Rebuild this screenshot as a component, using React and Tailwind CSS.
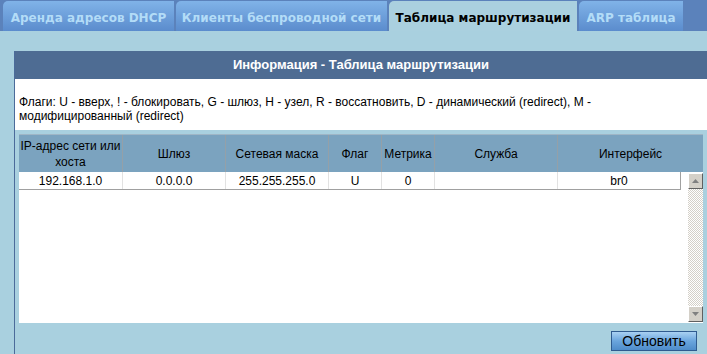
import React from "react";

const tabs = [
  { label: "Аренда адресов DHCP", w: "w-[171px]" },
  { label: "Клиенты беспроводной сети", w: "w-[211px]" },
  { label: "Таблица маршрутизации", w: "w-[188px]", active: true },
  { label: "ARP таблица", w: "w-[104px]" },
];

const cols = [
  { title: <>IP-адрес сети или<br />хоста</>, key: "ip", w: "w-[104px]", value: "192.168.1.0" },
  { title: "Шлюз", key: "gw", w: "w-[103px]", value: "0.0.0.0" },
  { title: "Сетевая маска", key: "mask", w: "w-[103px]", value: "255.255.255.0" },
  { title: "Флаг", key: "flag", w: "w-[53px]", value: "U" },
  { title: "Метрика", key: "metric", w: "w-[53px]", value: "0" },
  { title: "Служба", key: "svc", w: "w-[123px]", value: "" },
];

// кнопка скроллбара в стиле win
const ScrollBtn = ({ down }) => (
  <div className="w-[15px] h-[16px] bg-[#d4d0c8] border border-t-white border-l-white border-r-[#606060] border-b-[#606060] flex items-center justify-center">
    <svg width="9" height="6" viewBox="0 0 9 6">
      {down ? (
        <polygon points="1,1 8,1 4.5,5" fill="#808080" />
      ) : (
        <polygon points="1,5 8,5 4.5,1" fill="#808080" />
      )}
    </svg>
  </div>
);

export default function App() {
  return (
    <div className="w-[707px] h-[354px] overflow-hidden bg-[#a9d0df] font-['Liberation_Sans',Arial,sans-serif] text-black">
      {/* вкладки */}
      <div className="h-[31px] bg-[#5b82bb] flex items-end pl-[3px] gap-[2px]">
        {tabs.map((t) => (
          <div
            key={t.label}
            className={
              t.active
                ? `${t.w} h-[30px] rounded-tl-[5px] bg-[#aad0df] flex items-center justify-center pt-[4px] font-['DejaVu_Sans',Verdana,sans-serif] font-bold text-[12px] text-black`
                : `${t.w} h-[30px] rounded-tl-[5px] bg-gradient-to-b from-[#80b3e8] to-[#5b8ccd] flex items-center justify-center pt-[4px] font-['DejaVu_Sans',Verdana,sans-serif] font-bold text-[12px] text-[#b3dcf7]`
            }
          >
            {t.label}
          </div>
        ))}
      </div>

      <div className="ml-[14px] mt-[20px] border-l border-[#4b6b9a] h-[310px]">
        <div className="h-[28px] bg-[#4e6c93] flex items-center justify-center text-white font-bold text-[13px]">
          Информация - Таблица маршрутизации
        </div>
        <div className="bg-white pl-[4px] pt-[16px] pb-[7px] text-[12px] leading-[14px]">
          Флаги: U - вверх, ! - блокировать, G - шлюз, H - узел, R - воссатновить, D - динамический (redirect), M -
          <br />
          модифицированный (redirect)
        </div>

        <div className="pl-[4px] pt-[4px]">
          {/* шапка таблицы */}
          <div className="w-[684px] h-[38px] flex bg-[#7ba3bf] border-t border-[#9fb6c6] text-[12px] leading-[16px]">
            {cols.map((c) => (
              <div key={c.key} className={`${c.w} border-r border-[#94a0a8] flex items-center justify-center text-center`}>
                <span>{c.title}</span>
              </div>
            ))}
            <div className="flex-1 flex items-center justify-center">Интерфейс</div>
          </div>

          {/* тело */}
          <div className="w-[684px] h-[151px] bg-white flex">
            <div className="w-[662px]">
              <div className="h-[18px] flex border-b border-r border-[#a0a0a0] text-[12px]">
                {cols.map((c) => (
                  <div key={c.key} className={`${c.w} border-r border-[#e2e2e2] flex items-center justify-center`}>
                    {c.value}
                  </div>
                ))}
                <div className="flex-1 flex items-center justify-center">br0</div>
              </div>
            </div>
            <div className="ml-[7px] w-[15px] flex flex-col pt-[1px] pb-[1px]">
              <ScrollBtn />
              <div className="flex-1 bg-[repeating-conic-gradient(#d4d0c8_0%_25%,#ffffff_0%_50%)] bg-[length:2px_2px]" />
              <ScrollBtn down />
            </div>
          </div>

          <div className="w-[684px] flex justify-end pr-[6px] mt-[8px]">
            <button className="w-[86px] h-[20px] border border-[#2f5b8f] bg-gradient-to-b from-[#a9d1f2] via-[#6aa5dd] to-[#4e8cca] text-[14px] leading-[16px] text-black">
              Обновить
            </button>
          </div>
        </div>
      </div>
    </div>
  );
}
